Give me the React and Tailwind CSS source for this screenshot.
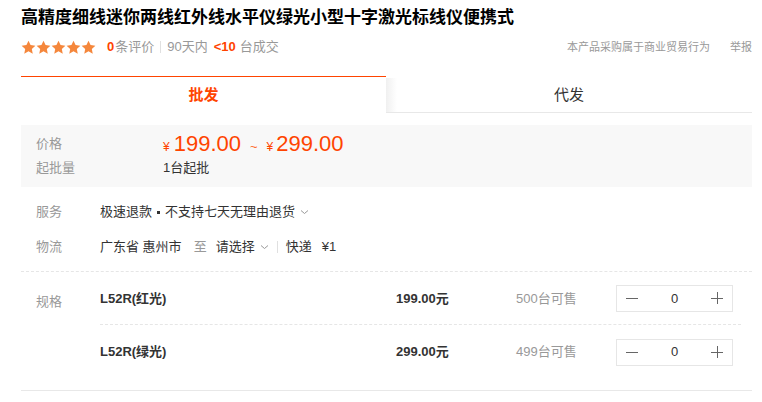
import React from 'react';

const font = 'font-["Liberation_Sans","Noto_Sans_CJK_SC",sans-serif]';

function Star() {
  return (
    <svg width="15" height="15" viewBox="0 0 24 24" className="fill-[#f5873c]">
      <path d="M12 1l3.3 7.1 7.7.9-5.7 5.3 1.5 7.6L12 18.1l-6.8 3.8 1.5-7.6L1 9l7.7-.9z" />
    </svg>
  );
}

function Chevron() {
  return (
    <svg width="9" height="6" viewBox="0 0 9 6" className="ml-[5px] stroke-[#999]" fill="none">
      <path d="M1 1.5l3.5 3 3.5-3" strokeWidth="1" />
    </svg>
  );
}

function Stepper() {
  return (
    <div className="flex items-center w-[117px] h-[27px] border border-[#e6e6e6] text-[13px]">
      <span className="w-[30px] flex justify-center">
        <span className="block w-[12px] h-px bg-[#666]" />
      </span>
      <span className="flex-1 text-center text-[#333]">0</span>
      <span className="w-[30px] flex justify-center relative">
        <span className="block w-[12px] h-px bg-[#666]" />
        <span className="absolute top-[-6px] left-[14.5px] block w-px h-[12px] bg-[#666]" />
      </span>
    </div>
  );
}

const specs = [
  { name: 'L52R(红光)', price: '199.00元', stock: '500' },
  { name: 'L52R(绿光)', price: '299.00元', stock: '499' },
];

export default function App() {
  return (
    <div className={`w-[762px] h-[402px] bg-white text-[#333] ${font}`}>
      <div className="pl-[21px] pr-[10px] pt-[6px]">
        {/* Title */}
        <h1 className="text-[17px] leading-[24px] font-bold text-black">
          高精度细线迷你两线红外线水平仪绿光小型十字激光标线仪便携式
        </h1>

        {/* Rating row */}
        <div className="mt-[9px] h-[16px] flex items-center justify-between text-[13px] leading-[16px]">
          <div className="flex items-center">
            <div className="flex">
              <Star /><Star /><Star /><Star /><Star />
            </div>
            <span className="ml-[11px] font-bold text-[#ff4400]">0</span>
            <span className="ml-[1px] text-[#999]">条评价</span>
            <span className="mx-[6px] w-px h-[12px] bg-[#e0e0e0]" />
            <span className="text-[#999]">90天内</span>
            <span className="ml-[6px] font-bold text-[#ff4400]">&lt;10</span>
            <span className="ml-[4px] text-[#999]">台成交</span>
          </div>
          <div className="flex items-center text-[11px] text-[#999]">
            <span>本产品采购属于商业贸易行为</span>
            <span className="ml-[20px]">举报</span>
          </div>
        </div>

        {/* Tabs */}
        <div className="mt-[21px] flex w-[731px] h-[37px] text-[15px]">
          <div className="w-[365px] border-t border-[#ff4400] flex items-center justify-center font-bold text-[#ff4400]">
            批发
          </div>
          <div className="flex-1 mt-[2px] flex items-center justify-center text-[#333] border-b border-[#e8e8e8] bg-gradient-to-r from-[#f0f0f0] from-0% to-white to-[3%]">
            代发
          </div>
        </div>

        {/* Price box */}
        <div className="mt-[12px] w-[731px] h-[62px] bg-[#f8f8f8] pl-[15px] pt-[6px] text-[13px]">
          <div className="flex items-center h-[26px]">
            <span className="w-[127px] text-[#999]">价格</span>
            <span className="text-[#ff4400] flex items-baseline">
              <span className="text-[12px] mr-[4px]">¥</span>
              <span className="text-[22px] leading-[26px]">199.00</span>
              <span className="text-[13px] mx-[9px] text-[#ff6a2a]">~</span>
              <span className="text-[12px] mr-[3px]">¥</span>
              <span className="text-[22px] leading-[26px]">299.00</span>
            </span>
          </div>
          <div className="flex items-center h-[20px] mt-[1px]">
            <span className="w-[127px] text-[#999]">起批量</span>
            <span className="text-[#333]">1台起批</span>
          </div>
        </div>

        {/* Service / logistics */}
        <div className="pl-[15px] pt-[15px] text-[13px]">
          <div className="flex items-center h-[20px]">
            <span className="w-[64px] text-[#999]">服务</span>
            <span>极速退款</span>
            <span className="mx-[5px] w-[3px] h-[3px] bg-[#333]" />
            <span>不支持七天无理由退货</span>
            <Chevron />
          </div>
          <div className="flex items-center h-[20px] mt-[15px]">
            <span className="w-[64px] text-[#999]">物流</span>
            <span>广东省 惠州市</span>
            <span className="ml-[12px] text-[#999]">至</span>
            <span className="ml-[9px]">请选择</span>
            <Chevron />
            <span className="ml-[8px] w-px h-[12px] bg-[#e0e0e0]" />
            <span className="ml-[8px]">快递</span>
            <span className="ml-[10px]">¥1</span>
          </div>
        </div>

        {/* Specs */}
        <div className="mt-[14px] w-[731px] border-t border-dashed border-[#e6e6e6] pb-[12px]">
          <div className="flex text-[13px]">
            <span className="w-[79px] pl-[15px] pt-[20px] text-[#999] leading-[20px]">规格</span>
            <div className="w-[641px]">
              {specs.map((s, i) => (
                <div
                  key={s.name}
                  className={`flex items-center h-[53px] pt-[1px] ${i === 0 ? 'border-b border-dashed border-[#e6e6e6]' : ''}`}
                >
                  <span className="w-[296px] font-bold text-[#333]">{s.name}</span>
                  <span className="w-[120px] font-bold text-[#333]">{s.price}</span>
                  <span className="w-[100px] text-[#999]">{s.stock}台可售</span>
                  <Stepper />
                </div>
              ))}
            </div>
          </div>
        </div>
        <div className="w-[731px] h-px bg-[#e8e8e8]" />
      </div>
    </div>
  );
}
